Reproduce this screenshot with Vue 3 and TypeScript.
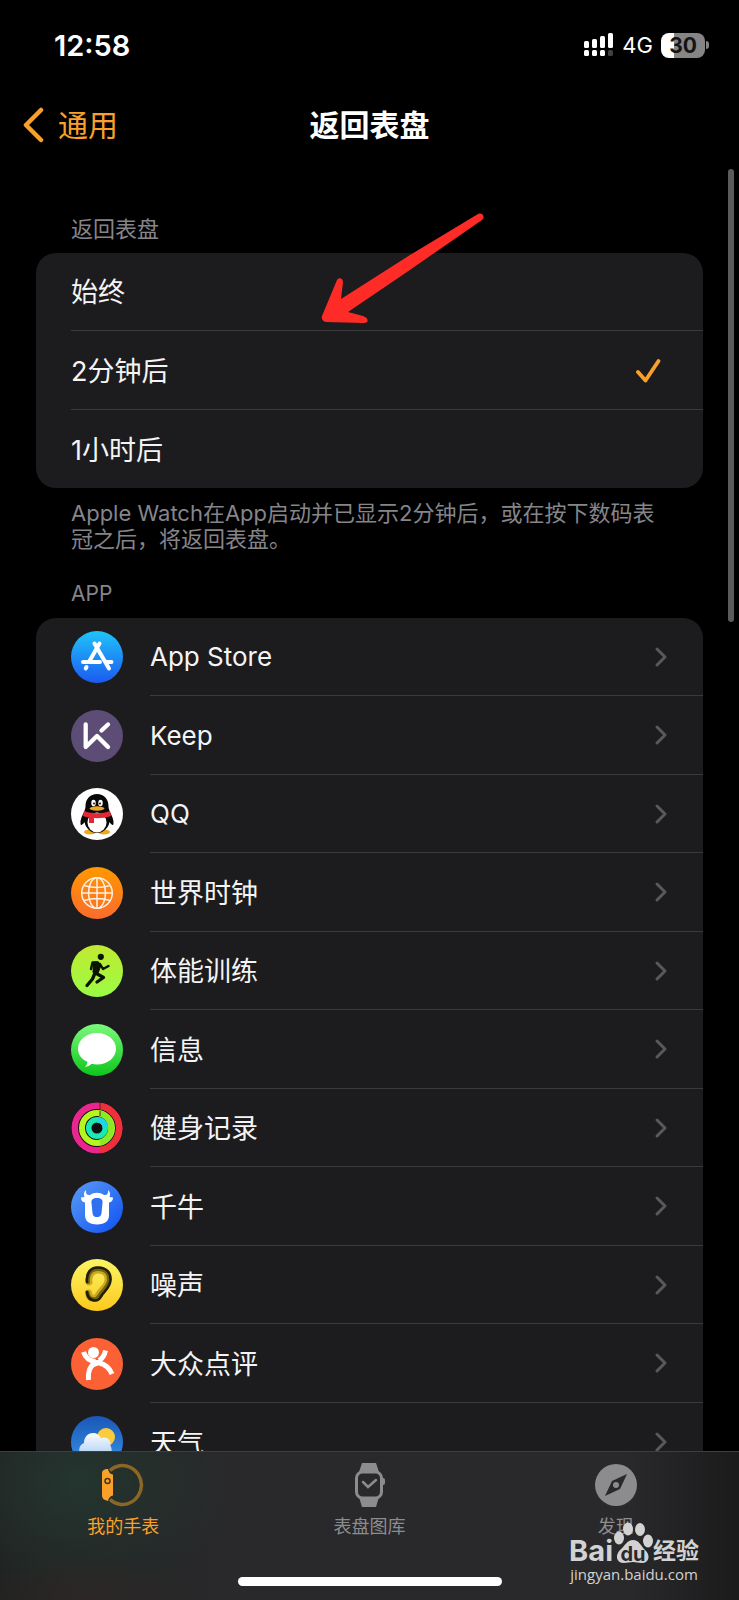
<script setup lang="ts">
import { ref } from 'vue'

interface AppRow {
  id: string
  name: string
  latin?: boolean
}

const options = ['始终', '2分钟后', '1小时后']
const selected = ref('2分钟后')

const apps: AppRow[] = [
  { id: 'store', name: 'App Store', latin: true },
  { id: 'keep', name: 'Keep', latin: true },
  { id: 'qq', name: 'QQ', latin: true },
  { id: 'clock', name: '世界时钟' },
  { id: 'workout', name: '体能训练' },
  { id: 'messages', name: '信息' },
  { id: 'activity', name: '健身记录' },
  { id: 'qianniu', name: '千牛' },
  { id: 'noise', name: '噪声' },
  { id: 'dianping', name: '大众点评' },
  { id: 'weather', name: '天气' },
]
</script>

<template>
  <div class="screen">
    <header class="status">
      <span class="time">12:58</span>
      <div class="indicators">
        <svg class="signal" viewBox="0 0 31 24" aria-hidden="true">
          <g fill="#fff">
            <rect x="0" y="8" width="5" height="7" rx="1.500" />
            <rect x="8" y="6" width="5" height="9" rx="1.500" />
            <rect x="16" y="3" width="5" height="12" rx="1.500" />
            <rect x="24" y="0" width="5" height="15" rx="1.500" />
            <rect x="0" y="17" width="5" height="6" rx="1.500" />
            <rect x="8" y="17" width="5" height="6" rx="1.500" />
            <rect x="16" y="17" width="5" height="6" rx="1.500" />
            <rect x="24" y="17" width="5" height="6" rx="1.500" opacity="0.25" />
          </g>
        </svg>
        <span class="network">4G</span>
        <span class="battery"><span class="cell">30</span><span class="cap"></span></span>
      </div>
    </header>

    <nav class="navbar">
      <a class="back" href="#">
        <svg viewBox="0 0 22 36" aria-hidden="true">
          <path d="M19 3 4 18l15 15" fill="none" stroke="currentColor" stroke-width="4.500" stroke-linecap="round" stroke-linejoin="round" />
        </svg>
        <span>通用</span>
      </a>
      <h1>返回表盘</h1>
    </nav>

    <main class="content">
      <h2 class="heading">返回表盘</h2>
      <div class="card choices">
        <label v-for="o in options" :key="o" class="row">
          <input v-model="selected" type="radio" name="return" :value="o" />
          <span class="line">
            <span class="label">{{ o }}</span>
            <svg v-if="selected === o" class="check" viewBox="0 0 26 26" aria-hidden="true">
              <path d="M3 15 10.500 23.500 23.500 4" fill="none" stroke="#f9a02b" stroke-width="3.800" stroke-linecap="round" stroke-linejoin="round" />
            </svg>
          </span>
        </label>
      </div>
      <p class="note">Apple Watch在App启动并已显示2分钟后，或在按下数码表冠之后，将返回表盘。</p>

      <h2 class="heading apps">APP</h2>
      <div class="card list">
        <a v-for="a in apps" :key="a.id" class="row" href="#">
          <svg class="icon" viewBox="0 0 52 52" aria-hidden="true">
            <template v-if="a.id === 'store'">
              <defs><linearGradient id="gs" x1="0" y1="0" x2="0" y2="1"><stop offset="0" stop-color="#1fc4fa" /><stop offset="1" stop-color="#1c5af0" /></linearGradient></defs>
              <circle cx="26" cy="26" r="26" fill="url(#gs)" />
              <g fill="none" stroke="#fff" stroke-width="4" stroke-linecap="round">
                <path d="M28.500 12.500 18.500 30M23.500 12.500 38 37.500M12 31h17M35 31h5.500M15.500 36l-.8 1.500" />
              </g>
            </template>
            <template v-else-if="a.id === 'keep'">
              <circle cx="26" cy="26" r="26" fill="#5d4c76" />
              <g fill="none" stroke="#fff" stroke-width="4.300" stroke-linecap="round" stroke-linejoin="round">
                <path d="M14.700 14.500v22.500L26 26 37 37M30.500 20.500 37 14.500" />
              </g>
            </template>
            <template v-else-if="a.id === 'qq'">
              <circle cx="26" cy="26" r="26" fill="#fff" />
              <ellipse cx="19" cy="44" rx="6" ry="2.500" fill="#eda91c" />
              <ellipse cx="33" cy="44" rx="6" ry="2.500" fill="#eda91c" />
              <path d="M26 6c-7 0-11.500 5-11.500 12 0 3-1 4-1.500 6-2 4-4 8-3.500 12 .3 2 2.500.5 4-2 1 6 6 11 12.500 11s11.500-5 12.500-11c1.500 2.500 3.700 4 4 2 .5-4-1.500-8-3.500-12-.5-2-1.500-3-1.500-6 0-7-4.500-12-11.500-12z" fill="#080808" />
              <ellipse cx="26" cy="34.500" rx="9.500" ry="10" fill="#fff" />
              <path d="M13 23c8 3 18 3 26 0l1 5c-8 3-20 3-28 0z" fill="#e52634" />
              <path d="M18 28h5v7h-5z" fill="#e52634" />
              <ellipse cx="22.500" cy="15" rx="2.200" ry="3.300" fill="#fff" />
              <ellipse cx="29.500" cy="15" rx="2.200" ry="3.300" fill="#fff" />
              <circle cx="23" cy="15.500" r="1" fill="#111" />
              <circle cx="29" cy="15.500" r="1" fill="#111" />
              <ellipse cx="26" cy="20.500" rx="7.500" ry="2.200" fill="#f2a51d" />
            </template>
            <template v-else-if="a.id === 'clock'">
              <defs><linearGradient id="gc" x1="0" y1="0" x2="0" y2="1"><stop offset="0" stop-color="#ff9800" /><stop offset="1" stop-color="#fb6b2d" /></linearGradient></defs>
              <circle cx="26" cy="26" r="26" fill="url(#gc)" />
              <g fill="none" stroke="#fff1e2" stroke-width="1.500">
                <circle cx="26" cy="26" r="15.300" /><ellipse cx="26" cy="26" rx="8.500" ry="15.300" />
                <path d="M10.700 26h30.600M26 10.700v30.600M13 18.500c8 2.500 18 2.500 26 0M13 33.500c8-2.500 18-2.500 26 0" />
              </g>
            </template>
            <template v-else-if="a.id === 'workout'">
              <defs><linearGradient id="gw" x1="0" y1="0" x2="0" y2="1"><stop offset="0" stop-color="#c1ea31" /><stop offset="1" stop-color="#9bfb45" /></linearGradient></defs>
              <circle cx="26" cy="26" r="26" fill="url(#gw)" />
              <circle cx="29.800" cy="11.800" r="3.100" fill="#0b1400" />
              <path d="M22 16.500h5.500l3 4-3.500 9-5.500-2z" fill="#0b1400" />
              <g fill="none" stroke="#0b1400" stroke-linecap="round" stroke-linejoin="round">
                <path d="M26 17.500h-4.500l-1.500 6.500M29 19l3 5 5.500-3" stroke-width="2.400" />
                <path d="M27 18.500 24.500 28 32.500 32.500 26 37M24 28 21.500 34l-5.500 6.500" stroke-width="3.300" />
              </g>
            </template>
            <template v-else-if="a.id === 'messages'">
              <defs><linearGradient id="gm" x1="0" y1="0" x2="0" y2="1"><stop offset="0" stop-color="#7bfa7b" /><stop offset="1" stop-color="#0dc51c" /></linearGradient></defs>
              <circle cx="26" cy="26" r="26" fill="url(#gm)" />
              <path d="M26 9c10.800 0 19 7 19 15.800s-8.200 15.700-19 15.700c-2 0-3.800-.2-5.500-.7-1.700 1.700-4 3-6.500 3.200 1.500-1.400 2.300-3.200 2.400-5.200C10.500 35.200 7 30.500 7 24.800 7 16 15.200 9 26 9z" fill="#fff" />
            </template>
            <template v-else-if="a.id === 'activity'">
              <circle cx="26" cy="26" r="26" fill="#101010" />
              <g fill="none">
                <circle cx="26" cy="26" r="22.200" stroke="#e9268f" stroke-width="6.500" />
                <path d="M29 4a22.200 22.200 0 0 1 0 44" stroke="#ee3038" stroke-width="6.500" />
                <circle cx="26" cy="26" r="15" stroke="#b7f51f" stroke-width="6" />
                <path d="M29 11.500a15 15 0 0 1 0 29" stroke="#8bea27" stroke-width="6" />
                <circle cx="26" cy="26" r="8.300" stroke="#1ae9b3" stroke-width="5.500" />
                <path d="M26 17.700a8.300 8.300 0 0 1 8.300 8.300" stroke="#20d5e8" stroke-width="5.500" />
                <path d="M29 1v6M29 9v5" stroke="#5c2024" stroke-width="1" />
              </g>
            </template>
            <template v-else-if="a.id === 'qianniu'">
              <defs><linearGradient id="gq" x1="0" y1="0" x2="1" y2="1"><stop offset="0" stop-color="#5c9cf5" /><stop offset="1" stop-color="#0e51f2" /></linearGradient></defs>
              <circle cx="26" cy="26" r="26" fill="url(#gq)" />
              <path d="M15 9c-.5 4 1 5.500 4 5 4-3 10-3 14 0 3 .5 4.500-1 4-5 2.500 2 2.500 5 1.500 7l3.500.5c0 3-1.500 4.500-4 5V34c0 6-4 9.500-12 9.500S14 40 14 34V21.500c-2.500-.5-4-2-4-5l3.500-.5c-1-2-1-5 1.500-7z" fill="#fff" />
              <path d="M26 17c4 0 6 1.500 5.500 5l-1 10c-.5 3-1.500 4-4.500 4s-4-1-4.500-4l-1-10c-.5-3.500 1.500-5 5.500-5z" fill="#2e70f1" />
            </template>
            <template v-else-if="a.id === 'noise'">
              <defs><linearGradient id="gn" x1="0" y1="0" x2="0" y2="1"><stop offset="0" stop-color="#fbf566" /><stop offset="1" stop-color="#fdc91c" /></linearGradient></defs>
              <circle cx="26" cy="26" r="26" fill="url(#gn)" />
              <g fill="none" stroke-linecap="round">
                <path d="M18 23c-1-7 3-12 9-12 7 0 10.500 4 10 10-.5 7-6 9-9.500 15-3 5-9 5-10-2" stroke="#c9ab22" stroke-width="7" />
                <path d="M17 23c-1-8 3-13 10-13 8 0 11.500 5 11 11-.5 7-6 10-9.500 15.500-3 5.500-11 5.500-12-3" stroke="#76650f" stroke-width="4" />
                <path d="M16 23c-1-9 3.500-14.500 11-14.500 8 0 13 5 12.500 12.500-.5 8-6 10.500-9.500 16.500-3 6-13 5.500-14-4.500" stroke="#211e06" stroke-width="2.600" />
              </g>
            </template>
            <template v-else-if="a.id === 'dianping'">
              <circle cx="26" cy="26" r="26" fill="#fb6134" />
              <circle cx="22.500" cy="14.500" r="5.500" fill="#fff" />
              <path d="M12.500 14c2 6 6 9 12 9.500M28 22.500c3.500-2 5.500-5 6.500-10M17.500 42c-1-13 5-18 11-17 6 1.500 10 5 12.500 11" fill="none" stroke="#fff" stroke-width="5" />
              <path d="M19 22h12l-1 4-9 4z" fill="#fff" />
            </template>
            <template v-else>
              <defs>
                <linearGradient id="gt" x1="0" y1="0" x2="0" y2="1"><stop offset="0" stop-color="#1a56b8" /><stop offset="1" stop-color="#3a97e8" /></linearGradient>
                <linearGradient id="gk" x1="0" y1="0" x2="0" y2="1"><stop offset="0" stop-color="#fafcff" /><stop offset="1" stop-color="#a9ccf5" /></linearGradient>
              </defs>
              <circle cx="26" cy="26" r="26" fill="url(#gt)" />
              <circle cx="35" cy="21" r="9" fill="#fbcb3c" />
              <path d="M14 42a8 8 0 0 1-1-15c0-6 4-10 9-10 4 0 6.500 2 8 5 6-2 10.500 2 9.500 8 3 5 0 12-6 12z" fill="url(#gk)" />
            </template>
          </svg>
          <span class="line">
            <span class="label" :class="{ latin: a.latin }">{{ a.name }}</span>
            <svg class="chevron" viewBox="0 0 14 22" aria-hidden="true">
              <path d="m3 3 8 8-8 8" fill="none" stroke="#59595d" stroke-width="3" stroke-linecap="round" stroke-linejoin="round" />
            </svg>
          </span>
        </a>
      </div>
    </main>

    <div class="scrollbar"></div>

    <svg class="arrow" viewBox="0 0 166 112" aria-hidden="true">
      <path d="M158 1C162-1 166 4 162 7L84 61 28 99l15 4c6 2 6 7 1 7L6 109c-3 0-5-3-4-6L17 67c2-3 6-2 6 2l-2 17L90 42z" fill="#ff2b27" />
    </svg>

    <footer class="tabs">
      <nav class="tabrow">
        <a class="tab active" href="#">
          <svg viewBox="0 0 44 44" aria-hidden="true">
            <path d="M9 7.500A19 20 0 0 1 40.500 22 19 20 0 0 1 9 36.500" fill="none" stroke="#8b6727" stroke-width="3.500" />
            <path d="M5 6h2q1 5 5 5.500v21q-4 .5-5 5.500l-3-1q-3-1-3-5V10q0-3 4-4z" fill="#f9a02b" />
            <circle cx="6.500" cy="18" r="2.500" fill="none" stroke="#4b3416" stroke-width="1.500" />
          </svg>
          <span>我的手表</span>
        </a>
        <a class="tab" href="#">
          <svg viewBox="0 0 44 44" aria-hidden="true">
            <path d="M15 0h14l3 9H12zM12 34h20l-3 10H15z" fill="#8c8c8f" />
            <rect x="9.500" y="9" width="25" height="26" rx="6" fill="#29292b" stroke="#8c8c8f" stroke-width="3" />
            <path d="M36 15q2 0 2 2v3q0 2-2 2z" fill="#8c8c8f" />
            <path d="m16 19 5 5 8-7" fill="none" stroke="#8c8c8f" stroke-width="2.500" stroke-linecap="round" />
          </svg>
          <span>表盘图库</span>
        </a>
        <a class="tab" href="#">
          <svg viewBox="0 0 44 44" aria-hidden="true">
            <circle cx="22" cy="22" r="21" fill="#8c8c8f" />
            <path d="M33 11 26 26 11 33l7-15z" fill="#29292b" />
            <circle cx="22" cy="22" r="3" fill="#8c8c8f" />
          </svg>
          <span>发现</span>
        </a>
      </nav>
      <div class="home"></div>
      <div class="mark">
        <div class="brand">
          <span class="bai">Bai</span>
          <span class="paw">
            <svg viewBox="0 0 40 42" aria-hidden="true">
              <g fill="#d2d2d3">
                <ellipse cx="6" cy="16" rx="5" ry="6.500" />
                <ellipse cx="15" cy="7" rx="5" ry="6.500" />
                <ellipse cx="27" cy="7.500" rx="5" ry="6.500" />
                <ellipse cx="35" cy="19" rx="5" ry="6.500" />
                <path d="M20 18c6 0 8 6 12 10 6 5 4 13-3 13-4 0-6-1-9-1s-6 1-9 1c-8 0-9-8-4-13 5-4 7-10 13-10z" />
              </g>
            </svg>
            <b>du</b>
          </span>
          <span class="cn">经验</span>
        </div>
        <div class="url">jingyan.baidu.com</div>
      </div>
    </footer>
  </div>
</template>

<style>
html,
body {
  background: #000;
}
</style>

<style scoped>
.screen {
  position: relative;
  height: 100vh;
  overflow: hidden;
  display: flex;
  flex-direction: column;
  background: #000;
  color: #f4f4f5;
  font-family: Inter, "Noto Sans CJK SC", sans-serif;
}
a {
  color: inherit;
  text-decoration: none;
}
h1,
h2,
p {
  margin: 0;
}
.status {
  display: flex;
  flex: none;
  align-items: center;
  justify-content: space-between;
  height: 90px;
  padding: 0 30px 0 54px;
  color: #fff;
}
.time {
  font-size: 29px;
  font-weight: 600;
}
.indicators {
  display: flex;
  align-items: center;
}
.signal {
  width: 31px;
  height: 24px;
}
.network {
  margin-left: 7px;
  font-size: 22px;
}
.battery {
  display: flex;
  align-items: center;
  gap: 1px;
  margin-left: 8px;
}
.cell {
  width: 44px;
  height: 25px;
  border-radius: 8px;
  background: linear-gradient(90deg, #fff 30%, #858585 30%);
  color: #141414;
  font-size: 21px;
  font-weight: 700;
  line-height: 25px;
  text-align: center;
}
.cap {
  width: 3px;
  height: 8px;
  border-radius: 0 3px 3px 0;
  background: #858585;
}
.navbar {
  display: grid;
  flex: none;
  grid-template-columns: 1fr auto 1fr;
  align-items: center;
  height: 70px;
  padding: 0 22px;
}
.back {
  display: flex;
  align-items: center;
  gap: 14px;
  color: #f9a02b;
  font-size: 30px;
}
.back svg {
  width: 22px;
  height: 36px;
}
.back span,
h1 {
  padding-bottom: 4px;
}
h1 {
  color: #fff;
  font-size: 30px;
  font-weight: 700;
}
.content {
  flex: 1;
  min-height: 0;
  overflow: hidden;
  padding: 56px 36px 0;
}
.heading {
  padding-left: 35px;
  color: #85858a;
  font-size: 22px;
  font-weight: 400;
  line-height: 26px;
}
.card {
  margin-top: 11px;
  overflow: hidden;
  border-radius: 20px;
  background: #1c1c1e;
}
.row {
  display: flex;
  height: 78px;
  padding-left: 35px;
}
.row:nth-child(even) {
  height: 79px;
}
.row input {
  position: absolute;
  opacity: 0;
}
.line {
  display: flex;
  flex: 1;
  align-items: center;
  justify-content: space-between;
  border-bottom: 1px solid #3a3a3d;
}
.row:last-child .line {
  border-bottom: 0;
}
.label {
  padding-bottom: 2px;
  font-size: 27px;
}
.latin {
  padding-bottom: 0;
  font-size: 26px;
}
.check {
  width: 26px;
  height: 26px;
  margin-right: 42px;
}
.note {
  padding: 12px 35px 0;
  color: #85858a;
  font-size: 22px;
  line-height: 26px;
}
.apps {
  margin-top: 29px;
  font-size: 21px;
}
.icon {
  align-self: center;
  width: 52px;
  height: 52px;
  margin-right: 27px;
}
.chevron {
  width: 14px;
  height: 22px;
  margin-right: 35px;
}
.scrollbar {
  position: absolute;
  top: 169px;
  right: 5px;
  width: 6px;
  height: 453px;
  border-radius: 3px;
  background: #5b5b5d;
}
.arrow {
  position: absolute;
  top: 213px;
  left: 320px;
  width: 166px;
  height: 112px;
  pointer-events: none;
}
.tabs {
  position: relative;
  display: flex;
  flex: none;
  flex-direction: column;
  justify-content: space-between;
  align-items: center;
  height: 148px;
  border-top: 1px solid #3d3e40;
  background:
    radial-gradient(ellipse 120px 50px at 80px 150px, #33282680 0%, transparent 100%),
    radial-gradient(ellipse 150px 120px at 80px 30px, #24352f 0%, transparent 100%),
    linear-gradient(90deg, #202221 0%, #29292b 30%, #29292b 85%, #1b1b1c 100%);
}
.tabrow {
  display: grid;
  grid-template-columns: repeat(3, 1fr);
  width: 100%;
}
.tab {
  display: flex;
  flex-direction: column;
  align-items: center;
  padding-top: 11px;
  color: #8c8c8f;
  font-size: 18px;
  line-height: 24px;
}
.tab svg {
  width: 44px;
  height: 44px;
  margin-bottom: 8px;
}
.active {
  color: #f9a02b;
}
.home {
  width: 264px;
  height: 9px;
  margin-bottom: 14px;
  border-radius: 5px;
  background: #fff;
}
.mark {
  position: absolute;
  right: 40px;
  bottom: 16px;
  color: #d2d2d3;
}
.brand {
  display: flex;
  align-items: flex-end;
}
.bai {
  font-size: 29px;
  font-weight: 700;
  line-height: 26px;
}
.paw {
  position: relative;
  width: 40px;
  height: 42px;
}
.paw svg {
  width: 40px;
  height: 42px;
}
.paw b {
  position: absolute;
  right: 0;
  bottom: 0;
  left: 0;
  color: #29292b;
  font-size: 20px;
  line-height: 20px;
  text-align: center;
}
.cn {
  font-size: 23px;
  font-weight: 700;
  line-height: 26px;
}
.url {
  font-family: "Open Sans", sans-serif;
  font-size: 15px;
  line-height: 20px;
  text-align: center;
}
</style>
